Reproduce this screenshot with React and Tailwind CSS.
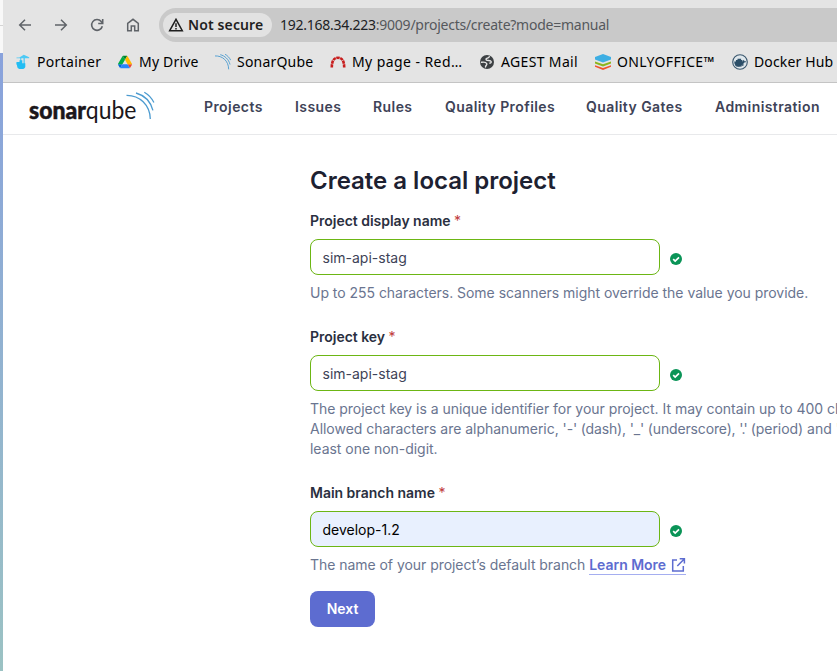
import React from "react";

const browserFont = "font-['Noto_Sans','Open_Sans',sans-serif]";

function Waves({ className }) {
  return (
    <svg className={className} viewBox="0 0 28 28" fill="none" stroke="#4c9bd0" strokeWidth="1.6">
      <path d="M0 3.4C12.5 2.8 23.7 11.5 23.9 26.8" />
      <path d="M9.2 1.2C17 3.1 24 9 26.3 18.4" />
      <path d="M17.6 0.5C21.8 2.7 25.2 6.3 27.4 10.8" />
    </svg>
  );
}

function PortainerIcon() {
  return (
    <svg className="size-4" viewBox="0 0 16 16">
      <path d="M4.300 3.400 8.800.8l5.400 2.500v.9H9.800V13H8.500V4.200H6.300v3.300H5.200V4.200H1.500v-.8z" fill="#4cc9f5" />
      <path d="M1.500 8h3V6.300h2.800v2.900h3V13c-.3 1.500-2 2.300-4.300 2-1.700.2-3.300-.5-3.700-2l-.5-2.500h-.5z" fill="#22bdf3" />
    </svg>
  );
}

function DriveIcon() {
  return (
    <svg className="size-4 p-px" viewBox="0 0 87.300 78">
      <path d="m6.600 66.850 3.850 6.650c.8 1.400 1.950 2.500 3.300 3.300l13.750-23.800h-27.500c0 1.550.4 3.100 1.200 4.500z" fill="#0066da" />
      <path d="m43.650 25-13.750-23.800c-1.350.8-2.500 1.900-3.300 3.300l-25.400 44a9 9 0 0 0-1.200 4.500h27.500z" fill="#00ac47" />
      <path d="m73.550 76.800c1.350-.8 2.500-1.900 3.300-3.300l1.600-2.750 7.650-13.250c.8-1.400 1.200-2.950 1.200-4.500h-27.500l5.850 11.500z" fill="#ea4335" />
      <path d="m43.650 25 13.750-23.800c-1.350-.8-2.900-1.200-4.500-1.200h-18.500c-1.600 0-3.150.45-4.500 1.200z" fill="#00832d" />
      <path d="m59.800 53h-32.300l-13.750 23.800c1.350.8 2.900 1.200 4.500 1.200h50.800c1.600 0 3.150-.45 4.500-1.200z" fill="#2684fc" />
      <path d="m73.400 26.500-12.700-22c-.8-1.400-1.950-2.500-3.300-3.300l-13.750 23.800 16.150 28h27.450c0-1.550-.4-3.100-1.200-4.500z" fill="#ffba00" />
    </svg>
  );
}

function RedmineIcon() {
  return (
    <svg className="size-4" viewBox="0 0 16 16" fill="none">
      <path d="M1.800 13.500C1.800 8 3.300 3.700 8 3.700s6.200 4.300 6.200 9.800" stroke="#c81e1e" strokeWidth="2.600" strokeDasharray="3.200 .6" />
    </svg>
  );
}

function GlobeIcon() {
  return (
    <svg className="size-4" viewBox="0 0 16 16">
      <circle cx="8" cy="8" r="7" fill="#3c4043" />
      <path d="M10.300 2.600C10 4 8.500 4 7.400 4.600c-.8.500-.2 1.600.8 1.800 1.700.3 3.600-.2 4 1.200.2.900-.6 1.500-1.500 1.500M2.500 8.300c2.200-.3 4.700 0 5.300 1.400.5 1.400-1.300 1.500-1.300 3.300" fill="none" stroke="#e4e4e4" strokeWidth="1.400" strokeLinecap="round" />
    </svg>
  );
}

function OnlyOfficeIcon() {
  return (
    <svg className="size-4" viewBox="0 0 16 16">
      <path d="M0 11.300 8 14l8-2.700v1.500L8 16l-8-3.200z" fill="#f0532d" />
      <path d="M0 7.400 8 10.200l8-2.800v2L8 12.500 0 9.400z" fill="#8bb51d" />
      <path d="M0 3.100 8 0l8 3.100v2.300L8 8.500 0 5.400z" fill="#3daee3" />
    </svg>
  );
}

function DockerIcon() {
  return (
    <svg className="size-4" viewBox="0 0 16 16">
      <circle cx="8" cy="8" r="7.300" fill="#dfe7ec" stroke="#39566d" strokeWidth="1.100" />
      <path d="M2.200 7.500h1.700V6h1.600V4.800h3.600V6h1.300v1.500c1 0 .7-1 1.100-1.700.7.400.9.900.9 1.400.7-.1 1.200 0 1.700.3-.4.900-1.200 1.100-2 1.100-1.200 3-3.100 3.900-5.500 3.900-2.900 0-4.300-1.600-4.400-5z" fill="#2b4e68" />
      <path d="M3.300 11.500c2.500 1.600 5.800 1.300 8.700-.8" stroke="#39566d" fill="none" strokeWidth=".8" />
    </svg>
  );
}

const bookmarks = [
  { label: "Portainer", icon: <PortainerIcon />, box: "w-[102px]", text: "tracking-[0.3px]" },
  { label: "My Drive", icon: <DriveIcon />, box: "w-[98px]", text: "tracking-[0.2px]" },
  { label: "SonarQube", icon: <Waves className="size-4" />, box: "w-[115px]", text: "tracking-[0.2px]" },
  { label: "My page - Red…", icon: <RedmineIcon />, box: "w-[149px]", text: "tracking-[0.42px]" },
  { label: "AGEST Mail", icon: <GlobeIcon />, box: "w-[116px]", text: "tracking-[0.35px]" },
  { label: "ONLYOFFICE™", icon: <OnlyOfficeIcon />, box: "w-[137px]", text: "tracking-[0.35px]" },
  { label: "Docker Hub", icon: <DockerIcon />, box: "w-[105px]", text: "tracking-[0.15px]" },
];

function BrowserChrome() {
  return (
    <div className={`h-[83px] shrink-0 border-b border-[#c4c4c4] bg-[#e4e4e4] ${browserFont}`}>
      <div className="flex h-[42px] items-end">
        <div className="flex h-[34px] w-[156px] shrink-0 items-center pl-[14px] text-[#5f6368]">
          <svg className="mr-5 size-4" viewBox="0 0 16 16" fill="none" stroke="currentColor" strokeWidth="1.500"><path d="M14 8H3M8 2.700 2.700 8 8 13.300" /></svg>
          <svg className="mr-5 size-4" viewBox="0 0 16 16" fill="none" stroke="currentColor" strokeWidth="1.500"><path d="M2 8h11M8 2.700 13.300 8 8 13.300" /></svg>
          <svg className="mr-5 size-4" viewBox="0 0 16 16" fill="none" stroke="currentColor" strokeWidth="1.600"><path d="M13.300 9.200A5.400 5.400 0 1 1 12.200 4.500L13.700 6M13.700 2v4.500H9.200" /></svg>
          <svg className="size-4" viewBox="0 0 16 16" fill="none" stroke="currentColor" strokeWidth="1.500"><path d="M2.700 6.300 8 2.300l5.300 4v7.400H9.700V9H6.300v4.700H2.700z" /></svg>
        </div>
        <div className="flex h-[34px] flex-1 items-center overflow-hidden rounded-l-full bg-[#c9c9c9] pl-1">
          <div className="flex h-6 w-[109px] shrink-0 items-center rounded-full bg-[#e2e2e2] pl-[5px]">
            <svg className="size-4 shrink-0" viewBox="0 0 16 16" fill="none" stroke="#1f1f1f" strokeWidth="1.500"><path d="M1.700 13.700 8 2.400l6.300 11.300zM8 6.200v3.700M8 10.900v1.500" /></svg>
            <span className="ml-1 text-sm font-semibold tracking-[0.12px] whitespace-nowrap text-[#1f1f1f]">Not secure</span>
          </div>
          <div className="ml-2 text-sm tracking-[-0.25px] whitespace-nowrap text-[#55585c]"><span className="text-[#202124]">192.168.34.223</span>:9009/projects/create?mode=manual</div>
        </div>
      </div>
      <div className="flex h-10 items-center overflow-hidden pl-3 text-sm text-black">
        {bookmarks.map((b) => (
          <div key={b.label} className={`flex shrink-0 items-center gap-1.5 ${b.box}`}>
            {b.icon}
            <span className={`whitespace-nowrap ${b.text}`}>{b.label}</span>
          </div>
        ))}
      </div>
    </div>
  );
}

const nav = [
  ["Projects", "w-[91px]"],
  ["Issues", "w-[78px]"],
  ["Rules", "w-[72px]"],
  ["Quality Profiles", "w-[141px]"],
  ["Quality Gates", "w-[129px]"],
  ["Administration", "w-[110px]"],
];

function Header() {
  return (
    <header className="flex h-[52px] shrink-0 items-center border-b border-[#e8e9eb] bg-white">
      <svg className="ml-6 h-[44px] w-[132px] shrink-0" viewBox="27 87 132 44">
        <text x="29" y="118.700" textLength="107.500" lengthAdjust="spacingAndGlyphs" fontFamily="Lato, sans-serif" fontWeight="900" fontSize="24.500" fill="#1b171b">
          <tspan stroke="#1b171b" strokeWidth=".5">sonar</tspan><tspan fontWeight="400">qube</tspan>
        </text>
        <g fill="none" stroke="#4c9bd0" strokeWidth="1.300">
          <path d="M126.500 95.300c13-.2 23.500 9.700 23.800 23.700" />
          <path d="M136 93c8.200 2.300 14.600 8.500 16.900 17.400" />
          <path d="M144.300 92.200c4.100 2.300 7.400 5.800 9.600 10.300" />
        </g>
      </svg>
      <nav className="mb-1 ml-[45px] flex text-sm font-semibold tracking-[0.42px] text-[#3e4357]">
        {nav.map(([label, w]) => (
          <a key={label} className={`shrink-0 whitespace-nowrap ${w}`}>{label}</a>
        ))}
      </nav>
    </header>
  );
}

function Field({ label, value, auto, children, className }) {
  return (
    <div className={className}>
      <div className="h-5 text-sm leading-5 font-semibold tracking-[-0.02px] text-[#2a2f40]">
        {label} <span className="font-normal text-[#c03b3b]">*</span>
      </div>
      <div className="mt-2 flex items-center">
        <div className={`flex h-9 w-[350px] items-center rounded-lg border border-[#6cb614] px-[11.500px] pt-0.5 text-sm ${auto ? "bg-[#e8f0fe] text-black" : "bg-white text-[#3e4357]"}`}>{value}</div>
        <svg className="mt-1 ml-[10px] size-3" viewBox="0 0 12 12"><circle cx="6" cy="6" r="6" fill="#0a9457" /><path d="m3.200 6.100 2 2 3.800-3.800" fill="none" stroke="#fff" strokeWidth="1.700" /></svg>
      </div>
      <div className="mt-2 text-sm leading-5 tracking-[-0.03px] whitespace-nowrap text-[#6a7590]">{children}</div>
    </div>
  );
}

export default function App() {
  return (
    <div className="flex h-[671px] w-[837px] overflow-hidden bg-white font-['Inter',sans-serif]">
      <div className="flex w-[3px] shrink-0 flex-col">
        <div className="h-[25px] bg-[#f8f8f8]" />
        <div className="h-px bg-[#d4d4d4]" />
        <div className="h-[27px] bg-[#f8f8f8]" />
        <div className="flex-1 bg-linear-to-b from-[#89a2dc] to-[#9bc2c3]" />
      </div>
      <div className="flex min-w-0 flex-1 flex-col">
        <BrowserChrome />
        <Header />
        <main className="ml-[307px] pt-[30px]">
          <h1 className="h-8 text-2xl leading-8 font-semibold tracking-[-0.01px] text-[#1d2131]">Create a local project</h1>
          <Field className="mt-[14px]" label="Project display name" value="sim-api-stag">
            Up to 255 characters. Some scanners might override the value you provide.
          </Field>
          <Field className="mt-6" label="Project key" value="sim-api-stag">
            The project key is a unique identifier for your project. It may contain up to 400 characters.<br />
            Allowed characters are alphanumeric, <span className="tracking-[-0.15px]">'-' (dash), '_' (underscore), </span><span className="tracking-[-0.9px]">'.'</span> (period) and ':' (colon), with at<br />
            least one non-digit.
          </Field>
          <Field className="mt-6" label="Main branch name" value="develop-1.2" auto>
            <span className="tracking-[-0.045px]">The name of your project’s default branch </span>
            <a className="inline-flex h-[18px] items-center border-b border-[#a5aef0] font-semibold tracking-[-0.03px] text-[#5d6cd0]">
              Learn More
              <svg className="ml-1 size-4" viewBox="0 0 16 16" fill="none" stroke="currentColor" strokeWidth="1.500"><path d="M7 3H2.700v11h10.600V9M9.700 1.800h4.700v4.700M14 2.200 7.300 9" /></svg>
            </a>
          </Field>
          <button className="mt-4 flex h-9 w-[65px] items-center justify-center rounded-lg bg-[#5d6cd0] text-sm font-semibold text-white">Next</button>
        </main>
      </div>
    </div>
  );
}
